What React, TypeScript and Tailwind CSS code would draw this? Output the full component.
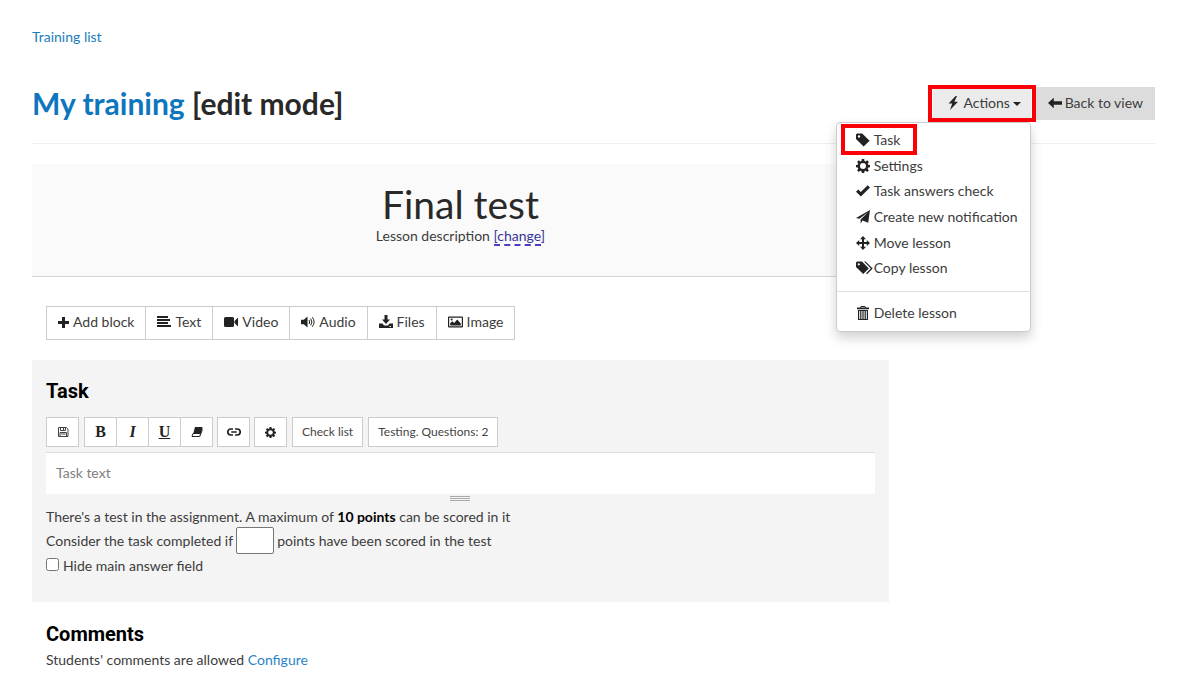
import type { ReactNode } from "react";

type IconProps = { size?: number; children: ReactNode; view?: string; width?: number };

function Svg({ size = 14, width, view = "0 0 14 14", children }: IconProps) {
  return (
    <svg
      width={width ?? size}
      height={size}
      viewBox={view}
      fill="currentColor"
      aria-hidden="true"
      className="shrink-0 text-[#222222]"
    >
      {children}
    </svg>
  );
}

const gearPath =
  "M5.8 0h2.4l.3 1.9 1.2.5L11.2 1.3l1.7 1.7-1.2 1.5.5 1.2 1.800.3v2.200l-1.800.3-.5 1.200 1.200 1.500-1.700 1.700-1.500-1.200-1.200.5L8.200 14H5.800l-.3-1.800-1.200-.5-1.500 1.200-1.700-1.700 1.200-1.500-.5-1.200L0 8.200V6l1.800-.3.5-1.200L1.100 3l1.700-1.700 1.500 1.100 1.200-.5zM7 4a3 3 0 1 0 0 6 3 3 0 0 0 0-6z";

const BoltIcon = () => (
  <Svg>
    <path d="M9.600 0 2.600 7.600h3.600L4 14l8-8.300H8.300L11 0z" />
  </Svg>
);
const ArrowLeftIcon = () => (
  <Svg>
    <path d="M0 7l5.800-5.200v3.500H14v3.400H5.800v3.500z" />
  </Svg>
);
const TagIcon = () => (
  <Svg>
    <path d="M0 1.500V6l7.600 7.400 6-5.700L6.200.500H1zM3 2.200a1.200 1.200 0 1 1 0 2.400 1.200 1.200 0 0 1 0-2.400z" fillRule="evenodd" />
  </Svg>
);
const TagsIcon = () => (
  <svg
    width="17"
    height="14"
    viewBox="0 0 17 14"
    fill="currentColor"
    aria-hidden="true"
    className="-mr-[3px] shrink-0 text-[#222222]"
  >
    <path d="M0 1.500V6l7.200 7 5.600-5.500L6 .500H1zM2.800 2.200a1.100 1.100 0 1 1 0 2.200 1.100 1.100 0 0 1 0-2.200z" fillRule="evenodd" />
    <path d="M8 .500h1.500l7.200 7-5.700 5.700-.9-.9 4.700-4.800z" />
  </svg>
);
const GearIcon = ({ size = 14 }: { size?: number }) => (
  <Svg size={size}>
    <path d={gearPath} fillRule="evenodd" />
  </Svg>
);
const CheckIcon = () => (
  <Svg>
    <path d="M0 7.800 2.300 5.500l2.500 2.600L11.700 1.300 14 3.500 4.900 12.600z" />
  </Svg>
);
const SendIcon = () => (
  <Svg>
    <path d="M14 0 0 8l3.400.8L12 2.200 4.600 9.600v4l2-3 5.600 2.200z" />
  </Svg>
);
const MoveIcon = () => (
  <Svg>
    <path d="M7 0l3 3.200H8v2.800h2.800V4L14 7l-3.200 3V8H8v2.800h2L7 14l-3-3.200h2V8H3.200v2L0 7l3.200-3v2H6V3.200H4z" />
  </Svg>
);
const TrashIcon = () => (
  <Svg>
    <path d="M5 0h4l.8 1.500H13v1.700H1V1.500h3.200zM5.300 1l-.3.500h4L8.700 1z" fillRule="evenodd" />
    <path d="M2 4h10v10H2zM3.200 5v8h1V5zm2.200 0v8h1V5zm2.200 0v8h1V5zm2.200 0v8h1V5z" fillRule="evenodd" />
  </Svg>
);
const PlusIcon = () => (
  <Svg size={11} view="0 0 11 11">
    <path d="M4 0h3v4h4v3H7v4H4V7H0V4h4z" />
  </Svg>
);
const AlignIcon = () => (
  <Svg>
    <path d="M0 1h11v2H0zM0 4h13v2H0zM0 7h11v2H0zM0 10h14v2H0z" />
  </Svg>
);
const VideoIcon = () => (
  <Svg>
    <path d="M1.500 2h7a1.500 1.500 0 0 1 1.500 1.500v7a1.500 1.500 0 0 1-1.500 1.500h-7A1.500 1.500 0 0 1 0 10.500v-7A1.500 1.500 0 0 1 1.500 2zM10.500 6 14 2.500v9L10.500 8z" />
  </Svg>
);
const AudioIcon = () => (
  <Svg>
    <path d="M0 4.700h2.800L6.500 1.500v11L2.800 9.300H0z" />
    <path
      d="M8 5q1.400 2 0 4M9.700 3.600q2.400 3.400 0 6.800M11.400 2.300q3.400 4.700 0 9.400"
      fill="none"
      stroke="currentColor"
    />
  </Svg>
);
const DownloadIcon = () => (
  <Svg>
    <path d="M5.500 0h3v4.500H11L7 9 3 4.500h2.500z" />
    <path d="M0 8.500h3.500l1.500 2h4l1.500-2H14V13H0zm10.500 2.500v1h1.500v-1z" fillRule="evenodd" />
  </Svg>
);
const ImageIcon = () => (
  <Svg width={15} view="0 0 15 14">
    <path d="M1 1.500h13a1 1 0 0 1 1 1v9a1 1 0 0 1-1 1H1a1 1 0 0 1-1-1v-9a1 1 0 0 1 1-1zM1.200 2.700v8.600h12.600V2.700z" fillRule="evenodd" />
    <path d="M2.200 10.500V8.200l2-2 2 1.800 3-3.500 3.600 4v2z" />
    <circle cx="3.700" cy="4.500" r="1" />
  </Svg>
);
const SaveIcon = () => (
  <svg width="12" height="12" viewBox="0 0 12 12" fill="none" stroke="#444444" aria-hidden="true">
    <path d="M1.500 1.500h7.800l1.700 1.700V10.500H1.500zM3.500 1.500v3h5v-3M6.500 2v2M3 10.500v-4h6.500v4M4 8h4.500" />
  </svg>
);
const EraserIcon = () => (
  <Svg size={12} view="0 0 12 12">
    <path d="M4 1h7.500L10 7H2.400z" />
    <path d="M2 7.500h7.700L8.600 10.500H1z" fill="none" stroke="currentColor" />
    <path d="M11.500 1.500v3L9 11l.5-4z" />
  </Svg>
);
const LinkIcon = () => (
  <svg width="14" height="10" viewBox="0 0 14 10" fill="none" stroke="#222222" strokeWidth="1.700" aria-hidden="true">
    <path d="M6 2H3.800a3 3 0 0 0 0 6H6M8 2h2.200a3 3 0 0 1 0 6H8M4.300 5h5.400" />
  </svg>
);

const menuItems = [
  { label: "Task", icon: <TagIcon />, marked: true },
  { label: "Settings", icon: <GearIcon /> },
  { label: "Task answers check", icon: <CheckIcon /> },
  { label: "Create new notification", icon: <SendIcon /> },
  { label: "Move lesson", icon: <MoveIcon /> },
  { label: "Copy lesson", icon: <TagsIcon /> },
];

const blocks = [
  { label: "Add block", icon: <PlusIcon /> },
  { label: "Text", icon: <AlignIcon /> },
  { label: "Video", icon: <VideoIcon /> },
  { label: "Audio", icon: <AudioIcon /> },
  { label: "Files", icon: <DownloadIcon /> },
  { label: "Image", icon: <ImageIcon /> },
];

function MenuLink({ label, icon, marked }: { label: string; icon: ReactNode; marked?: boolean }) {
  return (
    <a href="#" className="relative flex h-full items-center gap-1 px-[19px] whitespace-nowrap">
      {icon}
      {label}
      {marked && <span className="absolute -top-[3px] left-1 h-[31px] w-[76px] border-4 border-[#fb0007]" />}
    </a>
  );
}

function Tool({ label, children, wide }: { label?: string; children: ReactNode; wide?: boolean }) {
  return (
    <button
      type="button"
      aria-label={label}
      className={
        wide
          ? "flex h-[30px] items-center justify-center border border-[#cccccc] bg-white px-[9px] text-xs text-[#444444]"
          : "-ml-px flex h-[30px] w-[33px] items-center justify-center border border-[#cccccc] bg-white text-[#222222] first:ml-0"
      }
    >
      {children}
    </button>
  );
}

export default function App() {
  return (
    <div className="bg-white pr-[45px] pb-3 pl-8 font-['Lato','Liberation_Sans',sans-serif] text-sm leading-5 text-[#3c3c3c]">
      <nav className="pt-[27px]">
        <a href="#" className="text-[#1b7dbb]">Training list</a>
      </nav>

      <header className="mt-10 flex items-start justify-between border-b border-[#eeeeee] pb-[23px]">
        <h1 className="text-3xl leading-8 font-bold text-[#292929]">
          <a href="#" className="text-[#0e76bc]">My training</a> [edit mode]
        </h1>
        <div className="flex h-[33px] gap-[5px]">
          <div className="relative">
            <button type="button" className="flex h-full w-[98px] items-center justify-center gap-[3px] bg-[#ebebeb] pb-0.5 pl-1">
              <BoltIcon />
              Actions
              <span className="mt-0.5 border-x-4 border-t-4 border-x-transparent border-t-[#222222]" />
            </button>
            <span className="pointer-events-none absolute -inset-x-[5px] -inset-y-0.5 border-4 border-[#fb0007]" />
            <div className="absolute top-full right-0 z-10 mt-0.5 w-[195px] rounded border border-[#cccccc] bg-white pt-1 pb-[5px] shadow-[0_6px_12px_rgba(0,0,0,0.18)]">
              <ul className="flex h-[154px] flex-col">
                {menuItems.map((item) => (
                  <li key={item.label} className="flex-1">
                    <MenuLink {...item} />
                  </li>
                ))}
              </ul>
              <div className="mt-2.5 border-t border-[#e0e0e0] pt-2">
                <div className="h-[26px]">
                  <MenuLink label="Delete lesson" icon={<TrashIcon />} />
                </div>
              </div>
            </div>
          </div>
          <a href="#" className="flex items-center gap-[3px] bg-[#dcdcdc] px-3 pb-0.5">
            <ArrowLeftIcon />
            Back to view
          </a>
        </div>
      </header>

      <main className="mt-5 w-[76.3%]">
        <section className="border-b border-[#d5d5d5] bg-[#fafafa] pt-5 pb-[30px] text-center">
          <h2 className="text-[39px] leading-10 text-[#292929]">Final test</h2>
          <p className="mt-0.5">
            Lesson description{" "}
            <a href="#" className="text-[#35359a]">
              <span className="border-b-2 border-dashed border-[#4a3fc0]">[change</span>]
            </a>
          </p>
        </section>

        <div className="mt-[29px] ml-[14px] flex">
          {blocks.map((b) => (
            <button
              key={b.label}
              type="button"
              className="-ml-px flex h-[34px] items-center gap-1 border border-[#cccccc] bg-white px-[11px] pb-0.5 first:ml-0"
            >
              {b.icon}
              {b.label}
            </button>
          ))}
        </div>

        <section className="mt-5 bg-[#f4f4f4] px-[14px] pt-[19px] pb-[26px]">
          <h3 className="font-['Roboto',sans-serif] text-xl leading-6 font-bold text-black">Task</h3>
          <div className="mt-[14px] flex gap-[5px]">
            <Tool label="Save"><SaveIcon /></Tool>
            <div className="flex">
              <Tool label="Bold"><span className="font-['Liberation_Serif',serif] text-base font-bold">B</span></Tool>
              <Tool label="Italic"><span className="font-['Liberation_Serif',serif] text-base font-bold italic">I</span></Tool>
              <Tool label="Underline"><span className="font-['Liberation_Serif',serif] text-base font-bold underline">U</span></Tool>
              <Tool label="Clear formatting"><EraserIcon /></Tool>
            </div>
            <Tool label="Link"><LinkIcon /></Tool>
            <Tool label="Options"><GearIcon size={11} /></Tool>
            <Tool wide>Check list</Tool>
            <Tool wide>Testing. Questions: 2</Tool>
          </div>
          <textarea
            aria-label="Task text"
            placeholder="Task text"
            className="mt-[5px] block h-[42px] w-full resize-none overflow-hidden border-t border-[#dddddd] bg-white px-2.5 py-2.5 placeholder:text-[#808080]"
          />
          <div className="mx-auto mt-0.5 flex h-[5px] w-5 flex-col justify-between">
            <span className="h-px bg-[#aaaaaa]" />
            <span className="h-px bg-[#aaaaaa]" />
            <span className="h-px bg-[#aaaaaa]" />
          </div>
          <p className="mt-1.5">
            There's a test in the assignment. A maximum of <b className="text-black">10 points</b> can be scored in it
          </p>
          <label className="flex h-[27px] items-center gap-[3px]">
            Consider the task completed if
            <input type="text" className="h-[27px] w-[38px] rounded-xs border border-[#767676] bg-white px-1" />
            points have been scored in the test
          </label>
          <label className="mt-0.5 flex items-center gap-1">
            <input type="checkbox" className="mb-[3px] size-[13px]" />
            Hide main answer field
          </label>
        </section>

        <section className="mt-5 ml-[14px]">
          <h3 className="font-['Roboto',sans-serif] text-xl leading-6 font-bold text-black">Comments</h3>
          <p className="mt-1">
            Students' comments are allowed <a href="#" className="text-[#2b83c6]">Configure</a>
          </p>
        </section>
      </main>
    </div>
  );
}
